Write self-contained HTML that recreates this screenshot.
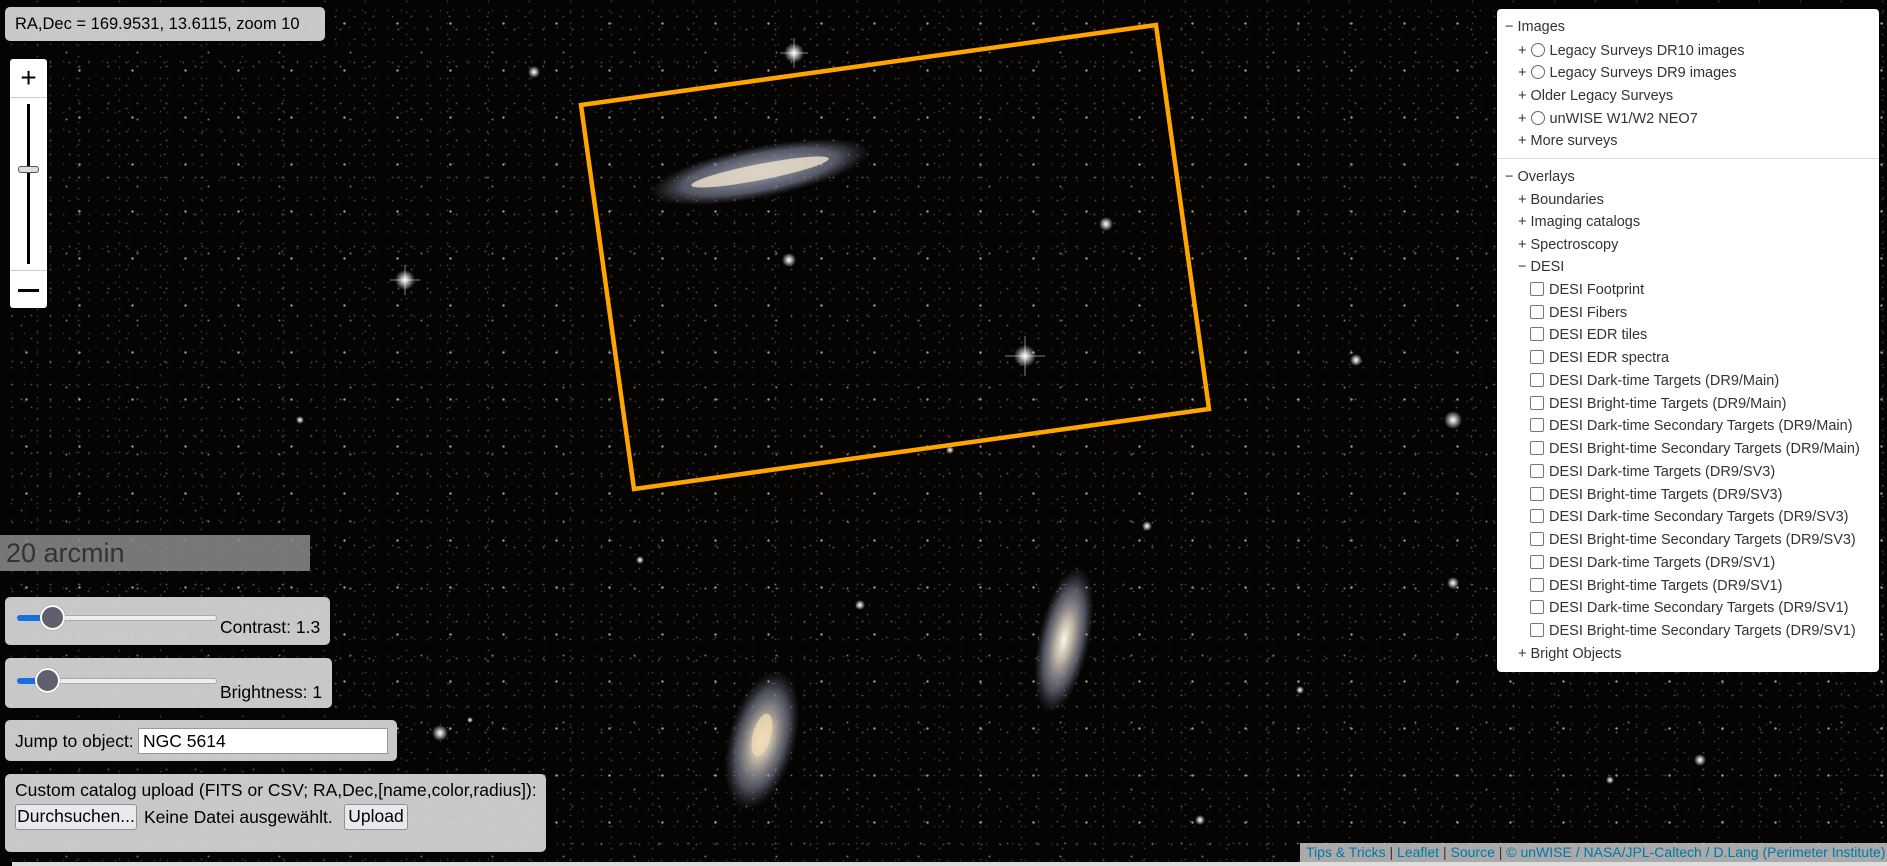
<!DOCTYPE html>
<html><head><meta charset="utf-8"><style>
*{box-sizing:border-box}
html,body{margin:0;padding:0;width:1887px;height:866px;overflow:hidden;background:#050403;font-family:"Liberation Sans",Arial,sans-serif}
#sky{position:absolute;left:0;top:0;width:1887px;height:866px;
background-image:
radial-gradient(circle,rgba(255,255,255,.6) 0 .9px,transparent 1.5px),
radial-gradient(circle,rgba(230,215,190,.35) 0 .7px,transparent 1.3px),
radial-gradient(circle,rgba(255,240,220,.3) 0 .6px,transparent 1.2px),
radial-gradient(circle,rgba(200,190,170,.25) 0 .6px,transparent 1.1px),
radial-gradient(circle,rgba(255,255,255,.45) 0 .7px,transparent 1.3px),
radial-gradient(circle,rgba(210,190,160,.3) 0 .6px,transparent 1.2px);
background-size:53px 47px,29px 37px,19px 23px,13px 17px,71px 67px,41px 11px;
background-position:0 0,7px 11px,3px 5px,5px 2px,31px 19px,17px 7px}
.box{position:absolute;background:rgba(215,215,215,.93);border-radius:5px;color:#000;font-size:17.5px}
.lp{position:absolute;left:1497px;top:9px;width:382px;height:663px;background:#fff;border-radius:4px;font-size:14.5px;color:#333}
.r{position:absolute;white-space:nowrap;line-height:18px}
.rad{display:inline-block;width:14px;height:14px;border:1.5px solid #666;border-radius:50%;vertical-align:-2px;margin-right:5px}
.cb{display:inline-block;width:14px;height:14px;border:1.5px solid #777;border-radius:2px;vertical-align:-2px;margin-right:5px}
.track{position:absolute;height:6px;border-radius:3px;background:#eee;border:1px solid #aaa}
.thumb{position:absolute;width:25px;height:25px;border-radius:50%;background:#5f5f6e;border:2px solid #fff;box-shadow:0 0 1px #555}
.btn{position:absolute;background:#e9e9ed;border:1px solid #8f8f9d;border-radius:3px;font-size:17.5px;line-height:22px;text-align:center}
</style></head><body>
<div id="sky"></div>
<svg width="1887" height="866" style="position:absolute;left:0;top:0">
<defs>
<radialGradient id="st"><stop offset="0" stop-color="#fff"/><stop offset=".25" stop-color="#fff" stop-opacity=".8"/><stop offset="1" stop-color="#fff" stop-opacity="0"/></radialGradient>
<radialGradient id="gx"><stop offset="0" stop-color="#fff8e8"/><stop offset=".3" stop-color="#cfc4b4" stop-opacity=".9"/><stop offset=".7" stop-color="#8a90a8" stop-opacity=".55"/><stop offset="1" stop-color="#556" stop-opacity="0"/></radialGradient>
<radialGradient id="hx"><stop offset="0" stop-color="#b8b8c8" stop-opacity=".9"/><stop offset=".7" stop-color="#8890a8" stop-opacity=".6"/><stop offset="1" stop-color="#667" stop-opacity="0"/></radialGradient>
</defs>
<g fill="url(#st)">
<circle cx="794" cy="53" r="10"/><circle cx="405" cy="280" r="10"/><circle cx="1025" cy="356" r="11"/><circle cx="534" cy="72" r="6"/><circle cx="1106" cy="224" r="7"/><circle cx="789" cy="260" r="7"/><circle cx="1356" cy="360" r="6"/><circle cx="1453" cy="420" r="9"/><circle cx="1147" cy="526" r="5"/><circle cx="440" cy="733" r="8"/><circle cx="1453" cy="583" r="6"/><circle cx="860" cy="605" r="5"/><circle cx="300" cy="420" r="4"/><circle cx="1700" cy="760" r="6"/><circle cx="1200" cy="820" r="5"/><circle cx="950" cy="450" r="4"/><circle cx="470" cy="720" r="3"/><circle cx="1610" cy="780" r="4"/><circle cx="640" cy="560" r="4"/><circle cx="1300" cy="690" r="4"/>
</g>
<g stroke="#fff" stroke-opacity=".5" stroke-width="1">
<path d="M1025 336V376M1005 356H1045M794 38V68M780 53H808M405 265V295M390 280H420"/>
</g>
<ellipse cx="760" cy="172" rx="112" ry="26" fill="url(#hx)" transform="rotate(-11 760 172)"/>
<ellipse cx="760" cy="172" rx="70" ry="8" fill="#e8dcc8" opacity=".85" transform="rotate(-11 760 172)"/>
<ellipse cx="1064" cy="640" rx="26" ry="75" fill="url(#gx)" transform="rotate(12 1064 640)"/>
<ellipse cx="762" cy="740" rx="34" ry="72" fill="url(#gx)" transform="rotate(15 762 740)"/>
<ellipse cx="762" cy="735" rx="9" ry="22" fill="#f0d8b0" opacity=".8" transform="rotate(15 762 735)"/>
<polygon points="581,105 1156,25 1209,409 634,489" fill="none" stroke="#ffa500" stroke-width="4.5" stroke-linejoin="miter"/>
</svg>

<div class="box" style="left:5px;top:7px;width:320px;height:34px;line-height:34px;padding-left:10px;font-size:16.5px">RA,Dec = 169.9531, 13.6115, zoom 10</div>

<div style="position:absolute;left:10px;top:59px;width:37px;height:249px;background:#fff;border-radius:3px">
<div style="position:absolute;left:0;top:0;width:37px;height:38px;text-align:center;font-size:28px;line-height:38px;color:#000">+</div>
<div style="position:absolute;left:0;top:38px;width:37px;border-top:1px solid #ccc"></div>
<div style="position:absolute;left:17px;top:45px;width:3px;height:160px;background:#000"></div>
<div style="position:absolute;left:8px;top:107px;width:21px;height:7px;background:#ddd;border:1px solid #555;border-radius:3px"></div>
<div style="position:absolute;left:0;top:211px;width:37px;border-top:1px solid #ccc"></div>
<div style="position:absolute;left:8px;top:230px;width:21px;height:3px;background:#000"></div>
</div>

<div style="position:absolute;left:0;top:535px;width:310px;height:36px;background:rgba(140,140,140,.85);color:#333;font-size:27px;line-height:36px;padding-left:6px">20 arcmin</div>

<div class="box" style="left:5px;top:597px;width:325px;height:48px">
<div class="track" style="left:12px;top:18px;width:200px;"></div>
<div style="position:absolute;left:12px;top:18px;width:36px;height:6px;background:#1a6fe0;border-radius:3px"></div>
<div class="thumb" style="left:35px;top:8px"></div>
<div style="position:absolute;left:215px;top:20px">Contrast: 1.3</div>
</div>
<div class="box" style="left:5px;top:658px;width:327px;height:50px">
<div class="track" style="left:12px;top:20px;width:200px;"></div>
<div style="position:absolute;left:12px;top:20px;width:30px;height:6px;background:#1a6fe0;border-radius:3px"></div>
<div class="thumb" style="left:30px;top:10px"></div>
<div style="position:absolute;left:215px;top:24px">Brightness: 1</div>
</div>
<div class="box" style="left:5px;top:720px;width:392px;height:41px">
<div style="position:absolute;left:10px;top:11px">Jump to object:</div>
<div style="position:absolute;left:133px;top:8px;width:250px;height:26px;background:#fff;border:1px solid #999;padding-left:4px;line-height:24px">NGC 5614</div>
</div>
<div class="box" style="left:5px;top:774px;width:541px;height:78px">
<div style="position:absolute;left:10px;top:6px;white-space:nowrap">Custom catalog upload (FITS or CSV; RA,Dec,[name,color,radius]):</div>
<div class="btn" style="left:10px;top:30px;width:122px;height:26px">Durchsuchen...</div>
<div style="position:absolute;left:139px;top:33px;white-space:nowrap">Keine Datei ausgewählt.</div>
<div class="btn" style="left:339px;top:30px;width:64px;height:26px">Upload</div>
</div>

<div style="position:absolute;left:1300px;top:843px;width:587px;height:19px;background:rgba(200,200,200,.85);font-size:14px;line-height:19px;color:#0078a8;white-space:nowrap;padding-left:6px">Tips &amp; Tricks <span style="color:#333">|</span> Leaflet <span style="color:#333">|</span> Source <span style="color:#333">|</span> © unWISE / NASA/JPL-Caltech / D.Lang (Perimeter Institute)</div>
<div style="position:absolute;left:12px;top:862px;width:1875px;height:4px;background:#ddd"></div>

<div class="lp">
<div class="r" style="left:8px;top:9px">− Images</div>
<div class="r" style="left:21px;top:33px">+ <span class="rad"></span>Legacy Surveys DR10 images</div>
<div class="r" style="left:21px;top:55px">+ <span class="rad"></span>Legacy Surveys DR9 images</div>
<div class="r" style="left:21px;top:78px">+ Older Legacy Surveys</div>
<div class="r" style="left:21px;top:101px">+ <span class="rad"></span>unWISE W1/W2 NEO7</div>
<div class="r" style="left:21px;top:123px">+ More surveys</div>
<div style="position:absolute;left:0;top:149px;width:382px;border-top:1px solid #ddd"></div>
<div class="r" style="left:8px;top:159px">− Overlays</div>
<div class="r" style="left:21px;top:182px">+ Boundaries</div>
<div class="r" style="left:21px;top:204px">+ Imaging catalogs</div>
<div class="r" style="left:21px;top:227px">+ Spectroscopy</div>
<div class="r" style="left:21px;top:249px">− DESI</div>
<div class="r" style="left:33px;top:272px"><span class="cb"></span>DESI Footprint</div>
<div class="r" style="left:33px;top:295px"><span class="cb"></span>DESI Fibers</div>
<div class="r" style="left:33px;top:317px"><span class="cb"></span>DESI EDR tiles</div>
<div class="r" style="left:33px;top:340px"><span class="cb"></span>DESI EDR spectra</div>
<div class="r" style="left:33px;top:363px"><span class="cb"></span>DESI Dark-time Targets (DR9/Main)</div>
<div class="r" style="left:33px;top:386px"><span class="cb"></span>DESI Bright-time Targets (DR9/Main)</div>
<div class="r" style="left:33px;top:408px"><span class="cb"></span>DESI Dark-time Secondary Targets (DR9/Main)</div>
<div class="r" style="left:33px;top:431px"><span class="cb"></span>DESI Bright-time Secondary Targets (DR9/Main)</div>
<div class="r" style="left:33px;top:454px"><span class="cb"></span>DESI Dark-time Targets (DR9/SV3)</div>
<div class="r" style="left:33px;top:477px"><span class="cb"></span>DESI Bright-time Targets (DR9/SV3)</div>
<div class="r" style="left:33px;top:499px"><span class="cb"></span>DESI Dark-time Secondary Targets (DR9/SV3)</div>
<div class="r" style="left:33px;top:522px"><span class="cb"></span>DESI Bright-time Secondary Targets (DR9/SV3)</div>
<div class="r" style="left:33px;top:545px"><span class="cb"></span>DESI Dark-time Targets (DR9/SV1)</div>
<div class="r" style="left:33px;top:568px"><span class="cb"></span>DESI Bright-time Targets (DR9/SV1)</div>
<div class="r" style="left:33px;top:590px"><span class="cb"></span>DESI Dark-time Secondary Targets (DR9/SV1)</div>
<div class="r" style="left:33px;top:613px"><span class="cb"></span>DESI Bright-time Secondary Targets (DR9/SV1)</div>
<div class="r" style="left:21px;top:636px">+ Bright Objects</div>
</div>
</body></html>
